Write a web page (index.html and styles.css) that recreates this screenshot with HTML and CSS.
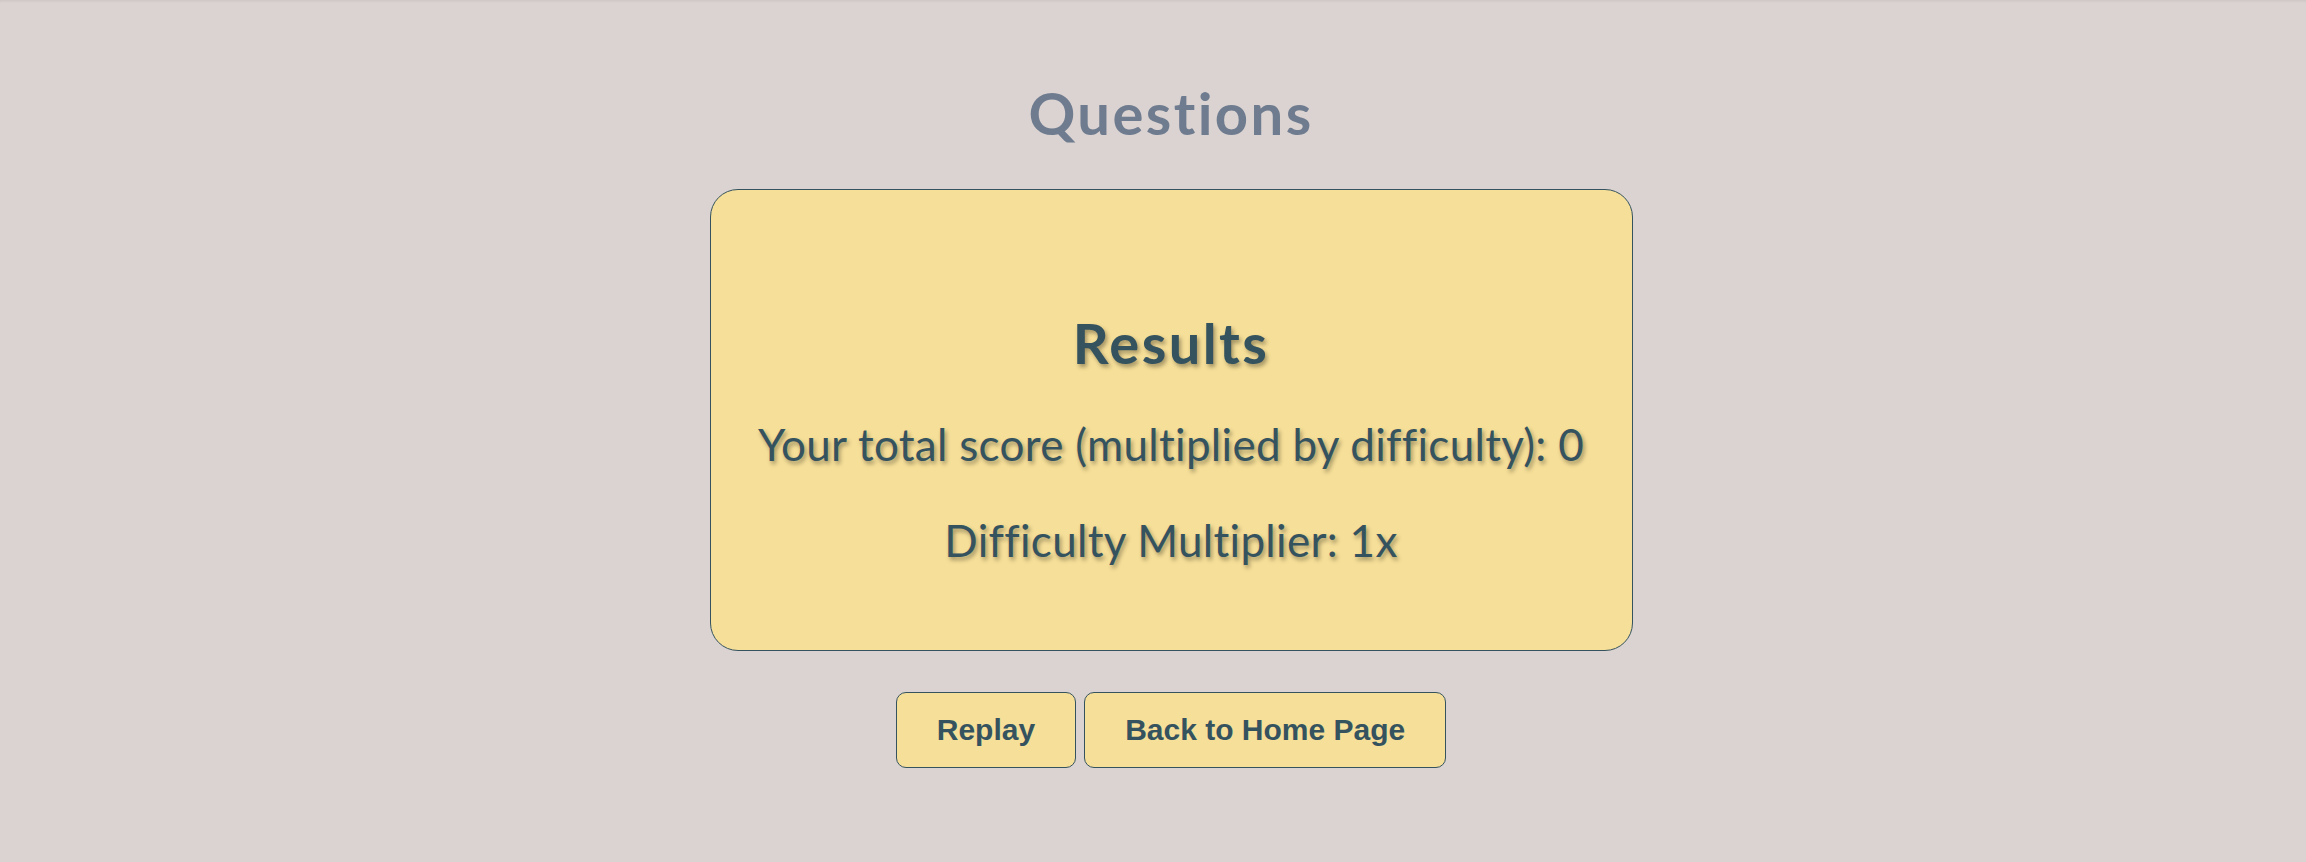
FILE: index.html
```html
<!DOCTYPE html>
<html lang="en">
<head>
<meta charset="utf-8">
<title>Questions</title>
<link rel="stylesheet" href="styles.css">
</head>
<body>
<main class="page">
  <h1 class="page-title">Questions</h1>
  <section class="results-card">
    <h2 class="results-title">Results</h2>
    <p class="results-line">Your total score (multiplied by difficulty): 0</p>
    <p class="results-line">Difficulty Multiplier: 1x</p>
  </section>
  <div class="actions">
    <button class="btn" type="button">Replay</button>
    <button class="btn" type="button">Back to Home Page</button>
  </div>
</main>
</body>
</html>
```

FILE: styles.css
```css
html, body {
  margin: 0;
  padding: 0;
}
body {
  background: #dbd3d1;
  min-height: 862px;
  font-family: Lato, "Open Sans", sans-serif;
  box-shadow: inset 0 3px 3px -2px rgba(0,0,0,0.08);
}
.page {
  display: flex;
  flex-direction: column;
  align-items: center;
  padding-left: 36px;
}
.page-title {
  margin: 80px 0 0;
  font-size: 58px;
  line-height: 66px;
  font-weight: 700;
  letter-spacing: 2.4px;
  color: #6f7c8f;
}
.results-card {
  box-sizing: border-box;
  width: 923px;
  height: 462px;
  margin-top: 43px;
  background: #f6df98;
  border: 1px solid #35535f;
  border-radius: 28px;
  display: flex;
  flex-direction: column;
  align-items: center;
  padding-top: 118px;
  color: #35535f;
  text-shadow: 2px 3px 4px rgba(0,0,0,0.35);
}
.results-title {
  margin: 0 0 36px;
  font-size: 56px;
  line-height: 70px;
  font-weight: 700;
  letter-spacing: 2.4px;
}
.results-line {
  margin: 0 0 36px;
  font-size: 44px;
  line-height: 60px;
  font-weight: 400;
  letter-spacing: 0.3px;
}
.results-line:last-child {
  margin-bottom: 0;
}
.actions {
  margin-top: 41px;
  display: flex;
  gap: 8px;
}
.btn {
  font-family: "Liberation Sans", Arial, sans-serif;
  font-weight: 700;
  font-size: 30px;
  line-height: 34px;
  color: #35535f;
  background: #f6df98;
  border: 1px solid #35535f;
  border-radius: 10px;
  padding: 20px 40px;
}
```
